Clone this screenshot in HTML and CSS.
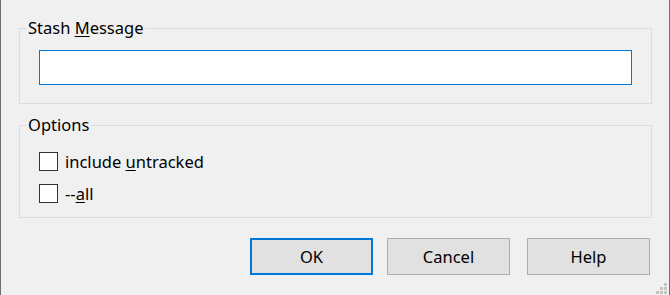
FILE: index.html
```html
<!DOCTYPE html>
<html>
<head>
<meta charset="utf-8">
<link rel="stylesheet" href="styles.css">
</head>
<body>
<div class="dialog">
  <fieldset class="group group-msg">
    <legend class="group-title">Stash <u>M</u>essage</legend>
    <input class="msg-input" type="text">
  </fieldset>
  <fieldset class="group group-opt">
    <legend class="group-title">Options</legend>
    <label class="check-row"><span class="check-box"></span><span class="check-label">include <u>u</u>ntracked</span></label>
    <label class="check-row"><span class="check-box"></span><span class="check-label">--<u>a</u>ll</span></label>
  </fieldset>
  <div class="buttons">
    <button class="btn btn-default">OK</button>
    <button class="btn btn-cancel">Cancel</button>
    <button class="btn btn-help">Help</button>
  </div>
  <div class="grip">
    <span class="dot d1"></span>
    <span class="dot d2"></span><span class="dot d3"></span>
    <span class="dot d4"></span><span class="dot d5"></span><span class="dot d6"></span>
  </div>
</div>
</body>
</html>
```

FILE: styles.css
```css
html, body {
  margin: 0;
  padding: 0;
  background: #f0f0f0;
}
body {
  font-family: "Noto Sans", "Open Sans", sans-serif;
  font-size: 16.5px;
  color: #000;
}
.dialog {
  position: relative;
  box-sizing: border-box;
  width: 670px;
  height: 295px;
  border-left: 1px solid #6f6f6f;
  border-right: 1px solid #6f6f6f;
  padding: 0 17px 0 18px;
  display: flex;
  flex-direction: column;
}
.group {
  margin: 0;
  border: 1px solid #dcdcdc;
  padding: 0;
  width: 633px;
  box-sizing: border-box;
  min-width: 0;
}
.group-title {
  margin-left: -13px;
  padding: 0 2px;
  line-height: 22px;
  height: 22px;
}
.group-msg {
  margin-top: 17px;
  padding: 11px 19px 18px 19px;
}
.msg-input {
  display: block;
  box-sizing: border-box;
  width: 593px;
  height: 35px;
  margin: 0;
  border: 1px solid #0078d7;
  background: #fff;
  outline: none;
  padding: 0 4px;
  font: inherit;
}
.group-opt {
  margin-top: 10px;
  padding: 9px 19px 8px 19px;
}
.check-row {
  display: flex;
  align-items: center;
  height: 32px;
  gap: 7px;
}
.check-box {
  box-sizing: border-box;
  width: 19px;
  height: 19px;
  border: 1px solid #333;
  background: #fff;
  flex: none;
}
.check-label u, .group-title u {
  text-underline-offset: 2px;
}
.buttons {
  display: flex;
  margin-top: 20px;
  padding-left: 231px;
}
.btn {
  box-sizing: border-box;
  width: 123px;
  height: 37px;
  margin: 0;
  padding: 0;
  background: #e1e1e1;
  border: 1px solid #adadad;
  font: inherit;
  color: #000;
}
.btn-default {
  border: 2px solid #0078d7;
}
.btn-cancel {
  margin-left: 14px;
}
.btn-help {
  margin-left: 17px;
}
.grip {
  position: absolute;
  right: 2px;
  bottom: 1px;
  width: 11px;
  height: 11px;
}
.dot {
  position: absolute;
  width: 3px;
  height: 3px;
  background: #c4c4c4;
}
.d1 { left: 8px; top: 0; }
.d2 { left: 4px; top: 4px; }
.d3 { left: 8px; top: 4px; }
.d4 { left: 0; top: 8px; }
.d5 { left: 4px; top: 8px; }
.d6 { left: 8px; top: 8px; }
```
